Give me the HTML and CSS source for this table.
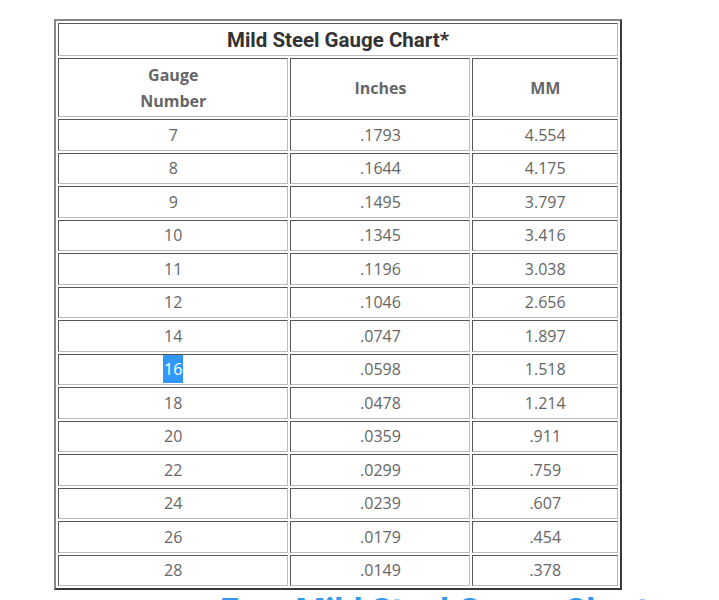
FILE: index.html
```html
<!DOCTYPE html>
<html>
<head>
<meta charset="utf-8">
<link rel="stylesheet" href="styles.css">
</head>
<body>
<div class="page">
  <table class="chart">
    <colgroup><col class="c1"><col class="c2"><col class="c3"></colgroup>
    <tr><th colspan="3" class="title">Mild Steel Gauge Chart*</th></tr>
    <tr class="head"><th>Gauge<br>Number</th><th>Inches</th><th>MM</th></tr>
    <tr><td>7</td><td>.1793</td><td>4.554</td></tr>
    <tr><td>8</td><td>.1644</td><td>4.175</td></tr>
    <tr><td>9</td><td>.1495</td><td>3.797</td></tr>
    <tr><td>10</td><td>.1345</td><td>3.416</td></tr>
    <tr><td>11</td><td>.1196</td><td>3.038</td></tr>
    <tr><td>12</td><td>.1046</td><td>2.656</td></tr>
    <tr><td>14</td><td>.0747</td><td>1.897</td></tr>
    <tr><td><span class="sel">16</span></td><td>.0598</td><td>1.518</td></tr>
    <tr><td>18</td><td>.0478</td><td>1.214</td></tr>
    <tr><td>20</td><td>.0359</td><td>.911</td></tr>
    <tr><td>22</td><td>.0299</td><td>.759</td></tr>
    <tr><td>24</td><td>.0239</td><td>.607</td></tr>
    <tr><td>26</td><td>.0179</td><td>.454</td></tr>
    <tr><td>28</td><td>.0149</td><td>.378</td></tr>
  </table>
  <h2 class="next">Free Mild Steel Gauge Chart</h2>
</div>
</body>
</html>
```
FILE: styles.css
```css
html, body {
  margin: 0;
  padding: 0;
  background: #fff;
}
.page {
  padding: 19px 0 0 54px;
  width: 568px;
}
.chart {
  border-collapse: separate;
  border-spacing: 2px;
  border-style: solid;
  border-width: 2px;
  border-color: #888 #3a3a3a #3a3a3a #888;
  width: 568px;
  font-family: "Open Sans", sans-serif;
  font-size: 16px;
  color: #666;
  table-layout: fixed;
}
.c1 { width: 228px; }
.c2 { width: 178px; }
.c3 { width: 144px; }
.chart th, .chart td {
  border: 1px solid;
  border-color: #555 #bbb #bbb #555;
  text-align: center;
  padding: 0;
}
.chart td {
  height: 29.5px;
  line-height: 26px;
}
.chart .title {
  height: 31px;
  font-family: Roboto, "Open Sans", sans-serif;
  font-weight: 700;
  font-size: 20.5px;
  line-height: 26px;
  color: #333;
}
.head th {
  height: 57px;
  line-height: 26px;
  font-weight: 700;
  font-size: 16px;
  color: #666;
}
.sel {
  background: #3297fd;
  color: #fff;
  display: inline-block;
  line-height: 28px;
  padding: 0 1px;
}
.next {
  margin: 1px 0 0 0;
  padding-left: 166px;
  font-family: Roboto, "Open Sans", sans-serif;
  font-size: 34px;
  font-weight: 700;
  color: #3399ee;
  line-height: 38px;
  white-space: nowrap;
}
```
